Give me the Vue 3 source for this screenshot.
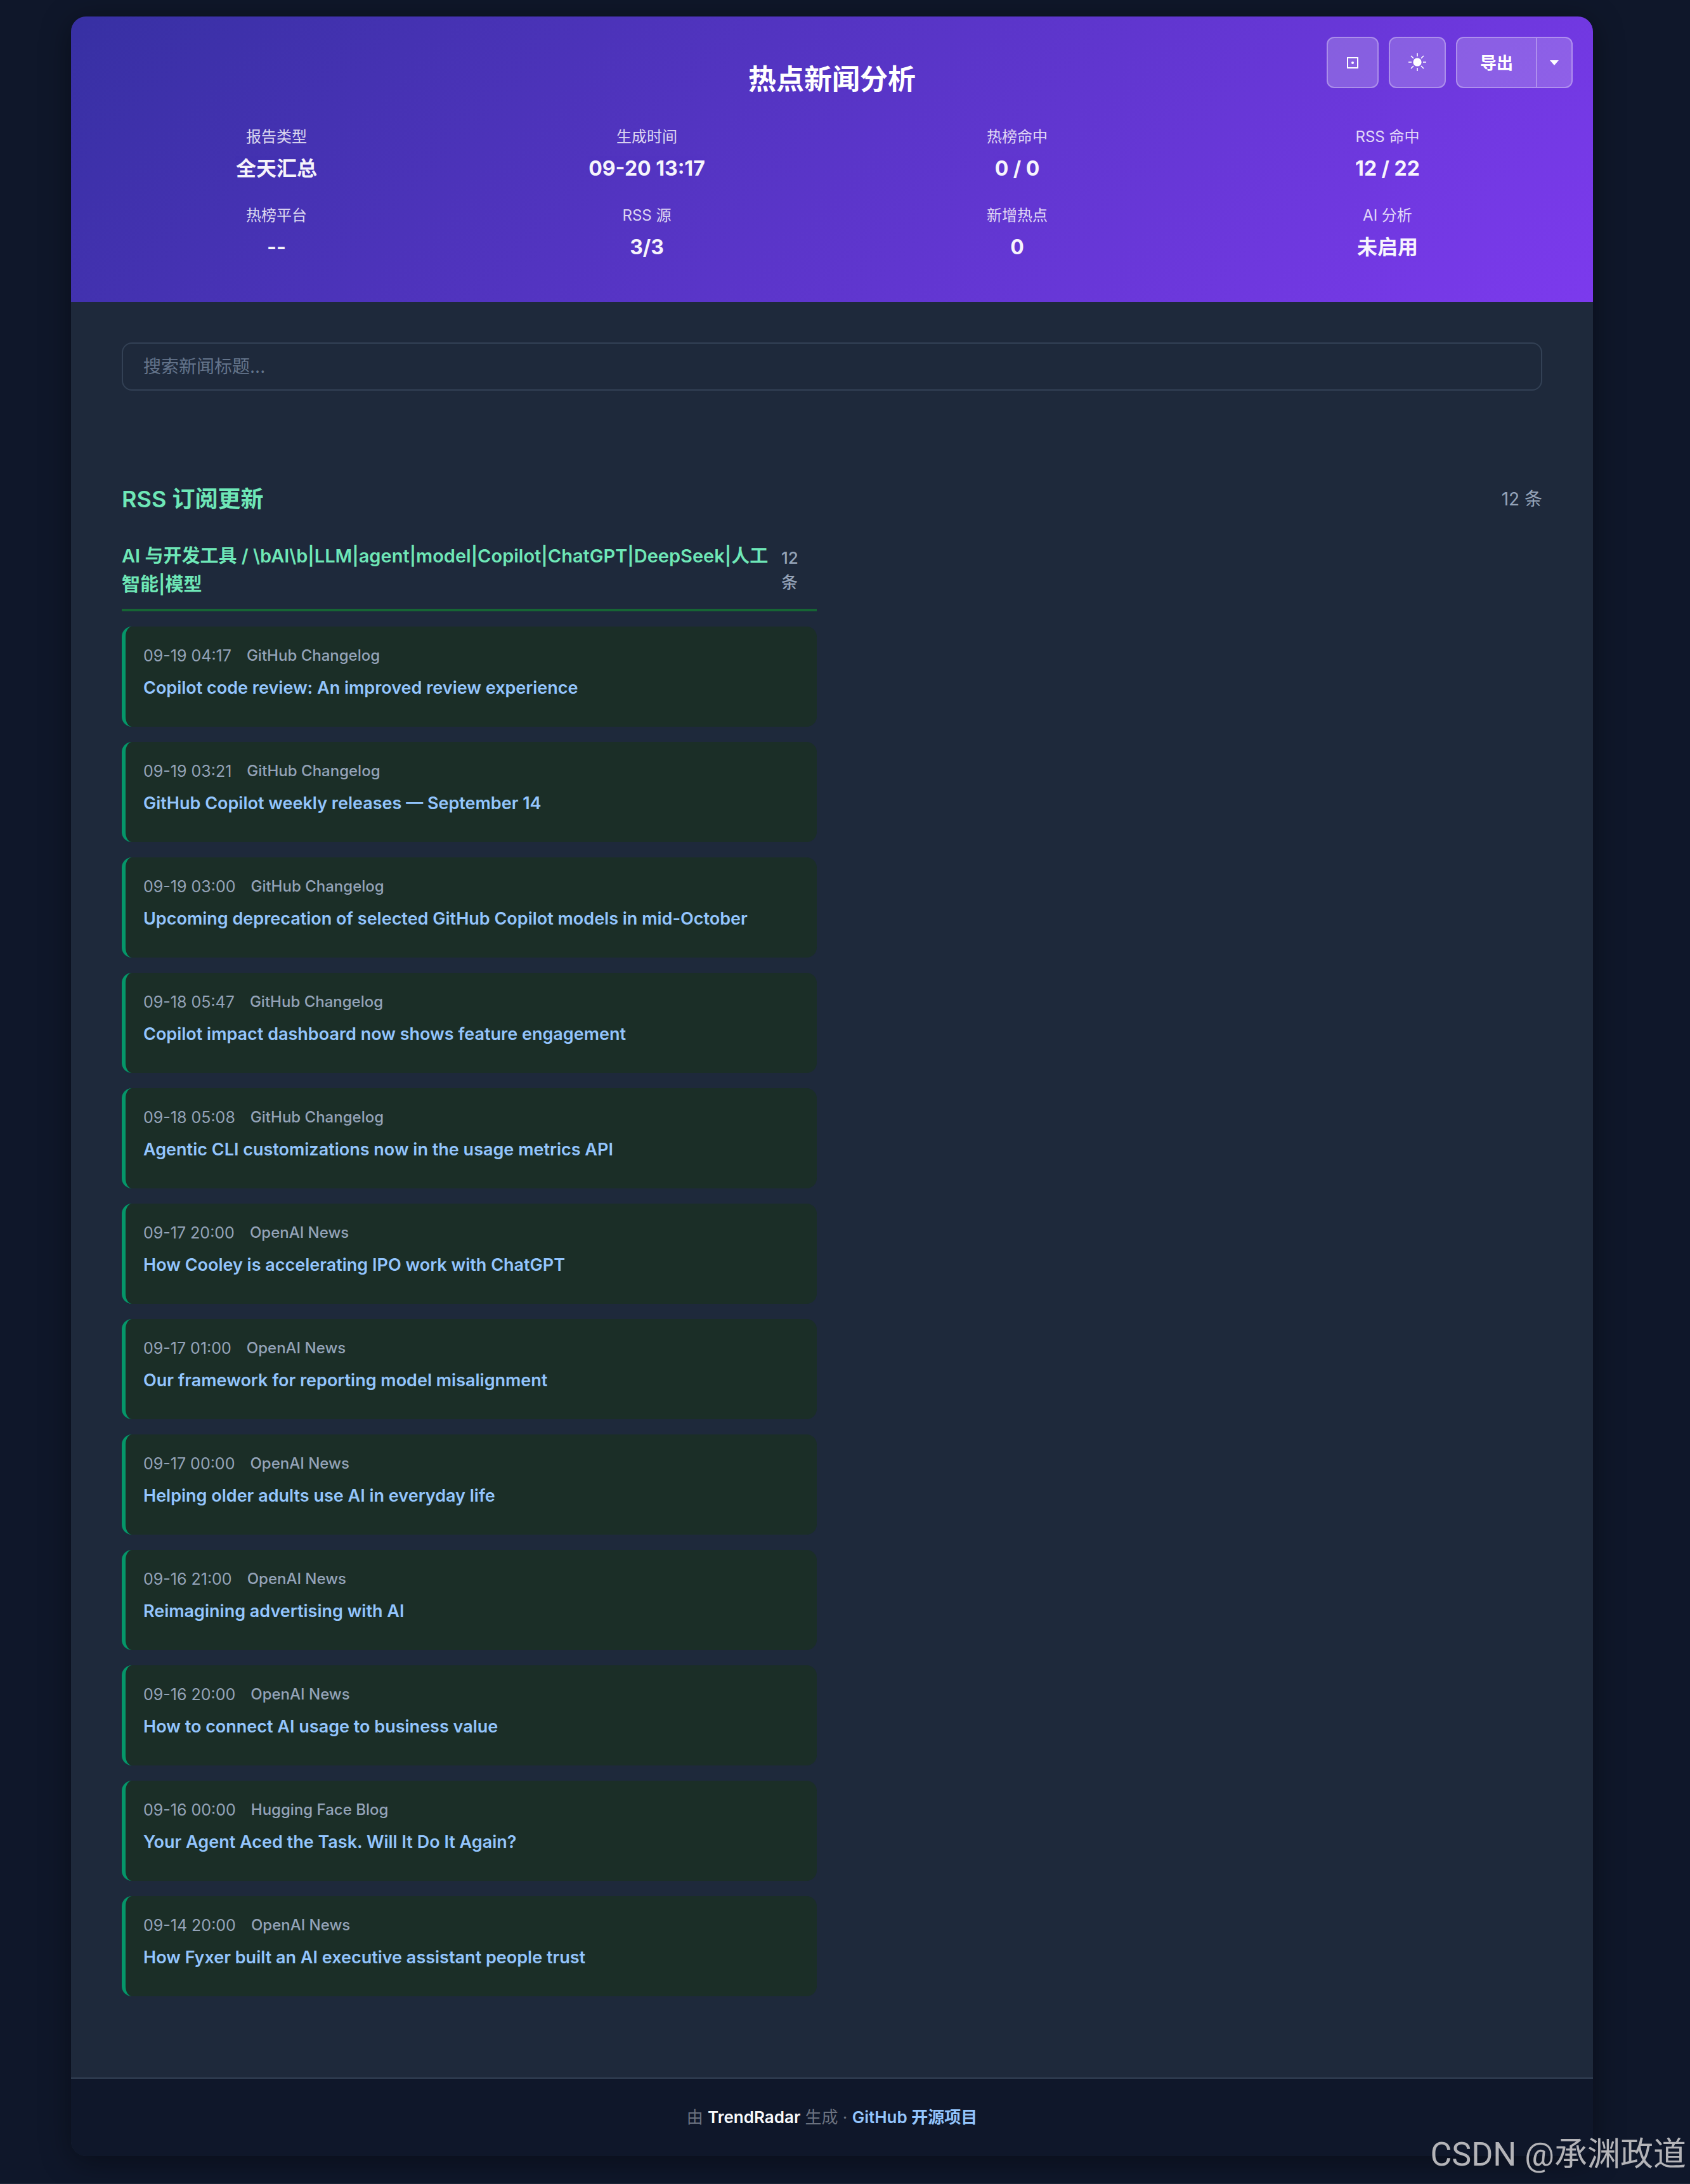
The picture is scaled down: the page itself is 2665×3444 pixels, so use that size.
<script setup>
import { ref, computed } from 'vue'

const keyword = ref('')

const stats = [
  { label: '报告类型', value: '全天汇总' },
  { label: '生成时间', value: '09-20 13:17' },
  { label: '热榜命中', value: '0 / 0' },
  { label: 'RSS 命中', value: '12 / 22' },
  { label: '热榜平台', value: '--' },
  { label: 'RSS 源', value: '3/3' },
  { label: '新增热点', value: '0' },
  { label: 'AI 分析', value: '未启用' }
]

const groupName = 'AI 与开发工具 / \\bAI\\b|LLM|agent|model|Copilot|ChatGPT|DeepSeek|人工智能|模型'

const items = [
  { time: '09-19 04:17', source: 'GitHub Changelog', title: 'Copilot code review: An improved review experience' },
  { time: '09-19 03:21', source: 'GitHub Changelog', title: 'GitHub Copilot weekly releases — September 14' },
  { time: '09-19 03:00', source: 'GitHub Changelog', title: 'Upcoming deprecation of selected GitHub Copilot models in mid-October' },
  { time: '09-18 05:47', source: 'GitHub Changelog', title: 'Copilot impact dashboard now shows feature engagement' },
  { time: '09-18 05:08', source: 'GitHub Changelog', title: 'Agentic CLI customizations now in the usage metrics API' },
  { time: '09-17 20:00', source: 'OpenAI News', title: 'How Cooley is accelerating IPO work with ChatGPT' },
  { time: '09-17 01:00', source: 'OpenAI News', title: 'Our framework for reporting model misalignment' },
  { time: '09-17 00:00', source: 'OpenAI News', title: 'Helping older adults use AI in everyday life' },
  { time: '09-16 21:00', source: 'OpenAI News', title: 'Reimagining advertising with AI' },
  { time: '09-16 20:00', source: 'OpenAI News', title: 'How to connect AI usage to business value' },
  { time: '09-16 00:00', source: 'Hugging Face Blog', title: 'Your Agent Aced the Task. Will It Do It Again?' },
  { time: '09-14 20:00', source: 'OpenAI News', title: 'How Fyxer built an AI executive assistant people trust' }
]

const visibleItems = computed(() => {
  const word = keyword.value.trim().toLowerCase()
  return items.filter((item) => item.title.toLowerCase().includes(word))
})
</script>

<template>
  <div class="page">
    <div class="container">
      <header class="header">
        <div class="actions">
          <button class="btn" type="button" aria-label="宽屏模式">
            <svg width="18" height="18" viewBox="0 0 18 18">
              <rect x="1" y="1" width="16" height="16" fill="none" stroke="#fff" stroke-width="2" />
              <circle cx="9" cy="9" r="2" fill="#fff" />
            </svg>
          </button>
          <button class="btn btn-theme" type="button" aria-label="切换主题">
            <svg width="28" height="30" viewBox="0 0 28 30">
              <circle cx="14" cy="14" r="6.6" fill="#fff" />
              <path
                d="M14 0v5M14 23v5M0 14h5M23 14h5M4 4l4 4M20 20l4 4M24 4l-4 4M8 20l-4 4"
                stroke="#fff"
                stroke-width="1.6"
              />
            </svg>
          </button>
          <div class="export">
            <button class="export-main" type="button">导出</button>
            <button class="export-more" type="button" aria-label="更多导出选项">
              <svg width="14" height="8" viewBox="0 0 14 8">
                <path d="M0 0h14L7 8z" fill="#fff" />
              </svg>
            </button>
          </div>
        </div>

        <h1 class="header-title">热点新闻分析</h1>

        <div class="stats">
          <div v-for="stat in stats" :key="stat.label" class="stat">
            <span class="stat-label">{{ stat.label }}</span>
            <span class="stat-value">{{ stat.value }}</span>
          </div>
        </div>
      </header>

      <main class="content">
        <input v-model="keyword" class="search" type="text" placeholder="搜索新闻标题..." aria-label="搜索新闻标题" />

        <section class="rss">
          <div class="rss-head">
            <h2>RSS 订阅更新</h2>
            <span class="rss-count">{{ items.length }} 条</span>
          </div>

          <div class="groups">
            <div class="group">
              <div class="group-head">
                <h3>{{ groupName }}</h3>
                <span class="group-count">{{ items.length }} 条</span>
              </div>

              <article v-for="item in visibleItems" :key="item.title" class="card">
                <div class="meta">
                  <span class="time">{{ item.time }}</span>
                  <span class="source">{{ item.source }}</span>
                </div>
                <a class="card-title" href="#">{{ item.title }}</a>
              </article>
            </div>
          </div>
        </section>
      </main>

      <footer class="footer">
        由 <strong>TrendRadar</strong> 生成 · <a href="#">GitHub 开源项目</a>
      </footer>
    </div>

    <div class="watermark">CSDN @承渊政道</div>
  </div>
</template>

<style>
body {
  background: #0f172a;
}
</style>

<style scoped>
.page {
  position: relative;
  box-sizing: border-box;
  min-height: 100vh;
  padding: 26px 153px 43px 112px;
  border-bottom: 1px solid #1e293b;
  font-family: Inter, "Noto Sans CJK SC", sans-serif;
  color: #ffffff;
}

.container {
  max-width: 2400px;
  margin: 0 auto;
  border-radius: 24px;
  overflow: hidden;
  background: #1e293b;
  box-shadow: 0 8px 48px rgba(0, 0, 0, 0.4);
}

.header {
  position: relative;
  padding: 66px 48px 62px;
  background: linear-gradient(135deg, #3730a3 0%, #7c3aed 100%);
  text-align: center;
}

.header-title {
  margin: 0 0 40px;
  font-size: 44px;
  font-weight: 700;
  line-height: 66px;
}

.actions {
  position: absolute;
  top: 32px;
  right: 32px;
  display: flex;
  gap: 16px;
}

.btn,
.export {
  box-sizing: border-box;
  height: 81px;
  border: 2px solid rgba(255, 255, 255, 0.3);
  border-radius: 12px;
  background: rgba(255, 255, 255, 0.2);
}

.btn {
  display: flex;
  justify-content: center;
  align-items: center;
  width: 82px;
  padding: 0;
  cursor: pointer;
}

.btn-theme {
  width: 90px;
}

.export {
  display: flex;
}

.export button {
  display: flex;
  align-items: center;
  border: none;
  background: none;
  color: #ffffff;
  font-family: inherit;
  font-size: 26px;
  font-weight: 600;
  cursor: pointer;
}

.export .export-main {
  padding: 0 36px 2px;
}

.export .export-more {
  padding: 0 20px;
  border-left: 2px solid rgba(255, 255, 255, 0.3);
}

.stats {
  display: grid;
  grid-template-columns: repeat(4, 1fr);
  gap: 32px;
}

.stat {
  display: flex;
  flex-direction: column;
  gap: 8px;
}

.stat-label {
  font-size: 24px;
  line-height: 36px;
  opacity: 0.8;
}

.stat-value {
  font-size: 32px;
  font-weight: 700;
  line-height: 48px;
  opacity: 0.95;
}

.content {
  padding: 64px 80px 128px;
}

.search {
  display: block;
  box-sizing: border-box;
  width: 100%;
  height: 76px;
  padding: 0 32px;
  border: 2px solid #334155;
  border-radius: 16px;
  background: #1e293b;
  color: #e2e8f0;
  font-family: inherit;
  font-size: 28px;
}

.search::placeholder {
  color: #64748b;
}

.rss {
  margin-top: 144px;
}

.rss-head {
  display: flex;
  justify-content: space-between;
  align-items: center;
  margin-bottom: 40px;
}

.rss-head h2 {
  margin: 0;
  font-size: 36px;
  font-weight: 600;
  line-height: 54px;
  color: #6ee7b7;
}

.rss-count {
  font-size: 28px;
  line-height: 42px;
  color: #94a3b8;
}

.groups {
  display: grid;
  grid-template-columns: repeat(2, 1fr);
  gap: 48px;
}

.group {
  display: flex;
  flex-direction: column;
  gap: 24px;
}

.group-head {
  display: flex;
  justify-content: space-between;
  align-items: center;
  gap: 16px;
  padding-bottom: 16px;
  border-bottom: 4px solid #166534;
}

.group-head h3 {
  margin: 0;
  font-size: 29px;
  font-weight: 600;
  line-height: 45px;
  color: #6ee7b7;
}

.group-count {
  flex: 0 0 56px;
  font-size: 26px;
  font-weight: 500;
  line-height: 39px;
  color: #94a3b8;
}

.card {
  display: flex;
  flex-direction: column;
  gap: 12px;
  padding: 28px 28px 40px;
  border-left: 6px solid #059669;
  border-radius: 16px;
  background: #1b2e27;
}

.meta {
  display: flex;
  gap: 24px;
  font-size: 24px;
  line-height: 36px;
  color: #94a3b8;
}

.time {
  font-size: 25px;
}

.source {
  font-weight: 500;
}

.card-title {
  font-size: 27px;
  font-weight: 600;
  line-height: 42px;
  color: #93c5fd;
  text-decoration: none;
}

.footer {
  padding: 40px;
  border-top: 2px solid #334155;
  background: #0f172a;
  color: #6b7280;
  font-size: 26px;
  line-height: 42px;
  text-align: center;
}

.footer strong {
  font-weight: 600;
  color: #f8fafc;
}

.footer a {
  font-weight: 600;
  color: #93c5fd;
  text-decoration: none;
}

.watermark {
  position: absolute;
  right: 6px;
  bottom: 6px;
  color: #b4b4b8;
  font-family: Roboto, "Noto Sans CJK SC", sans-serif;
  font-size: 52px;
  line-height: 78px;
}
</style>
